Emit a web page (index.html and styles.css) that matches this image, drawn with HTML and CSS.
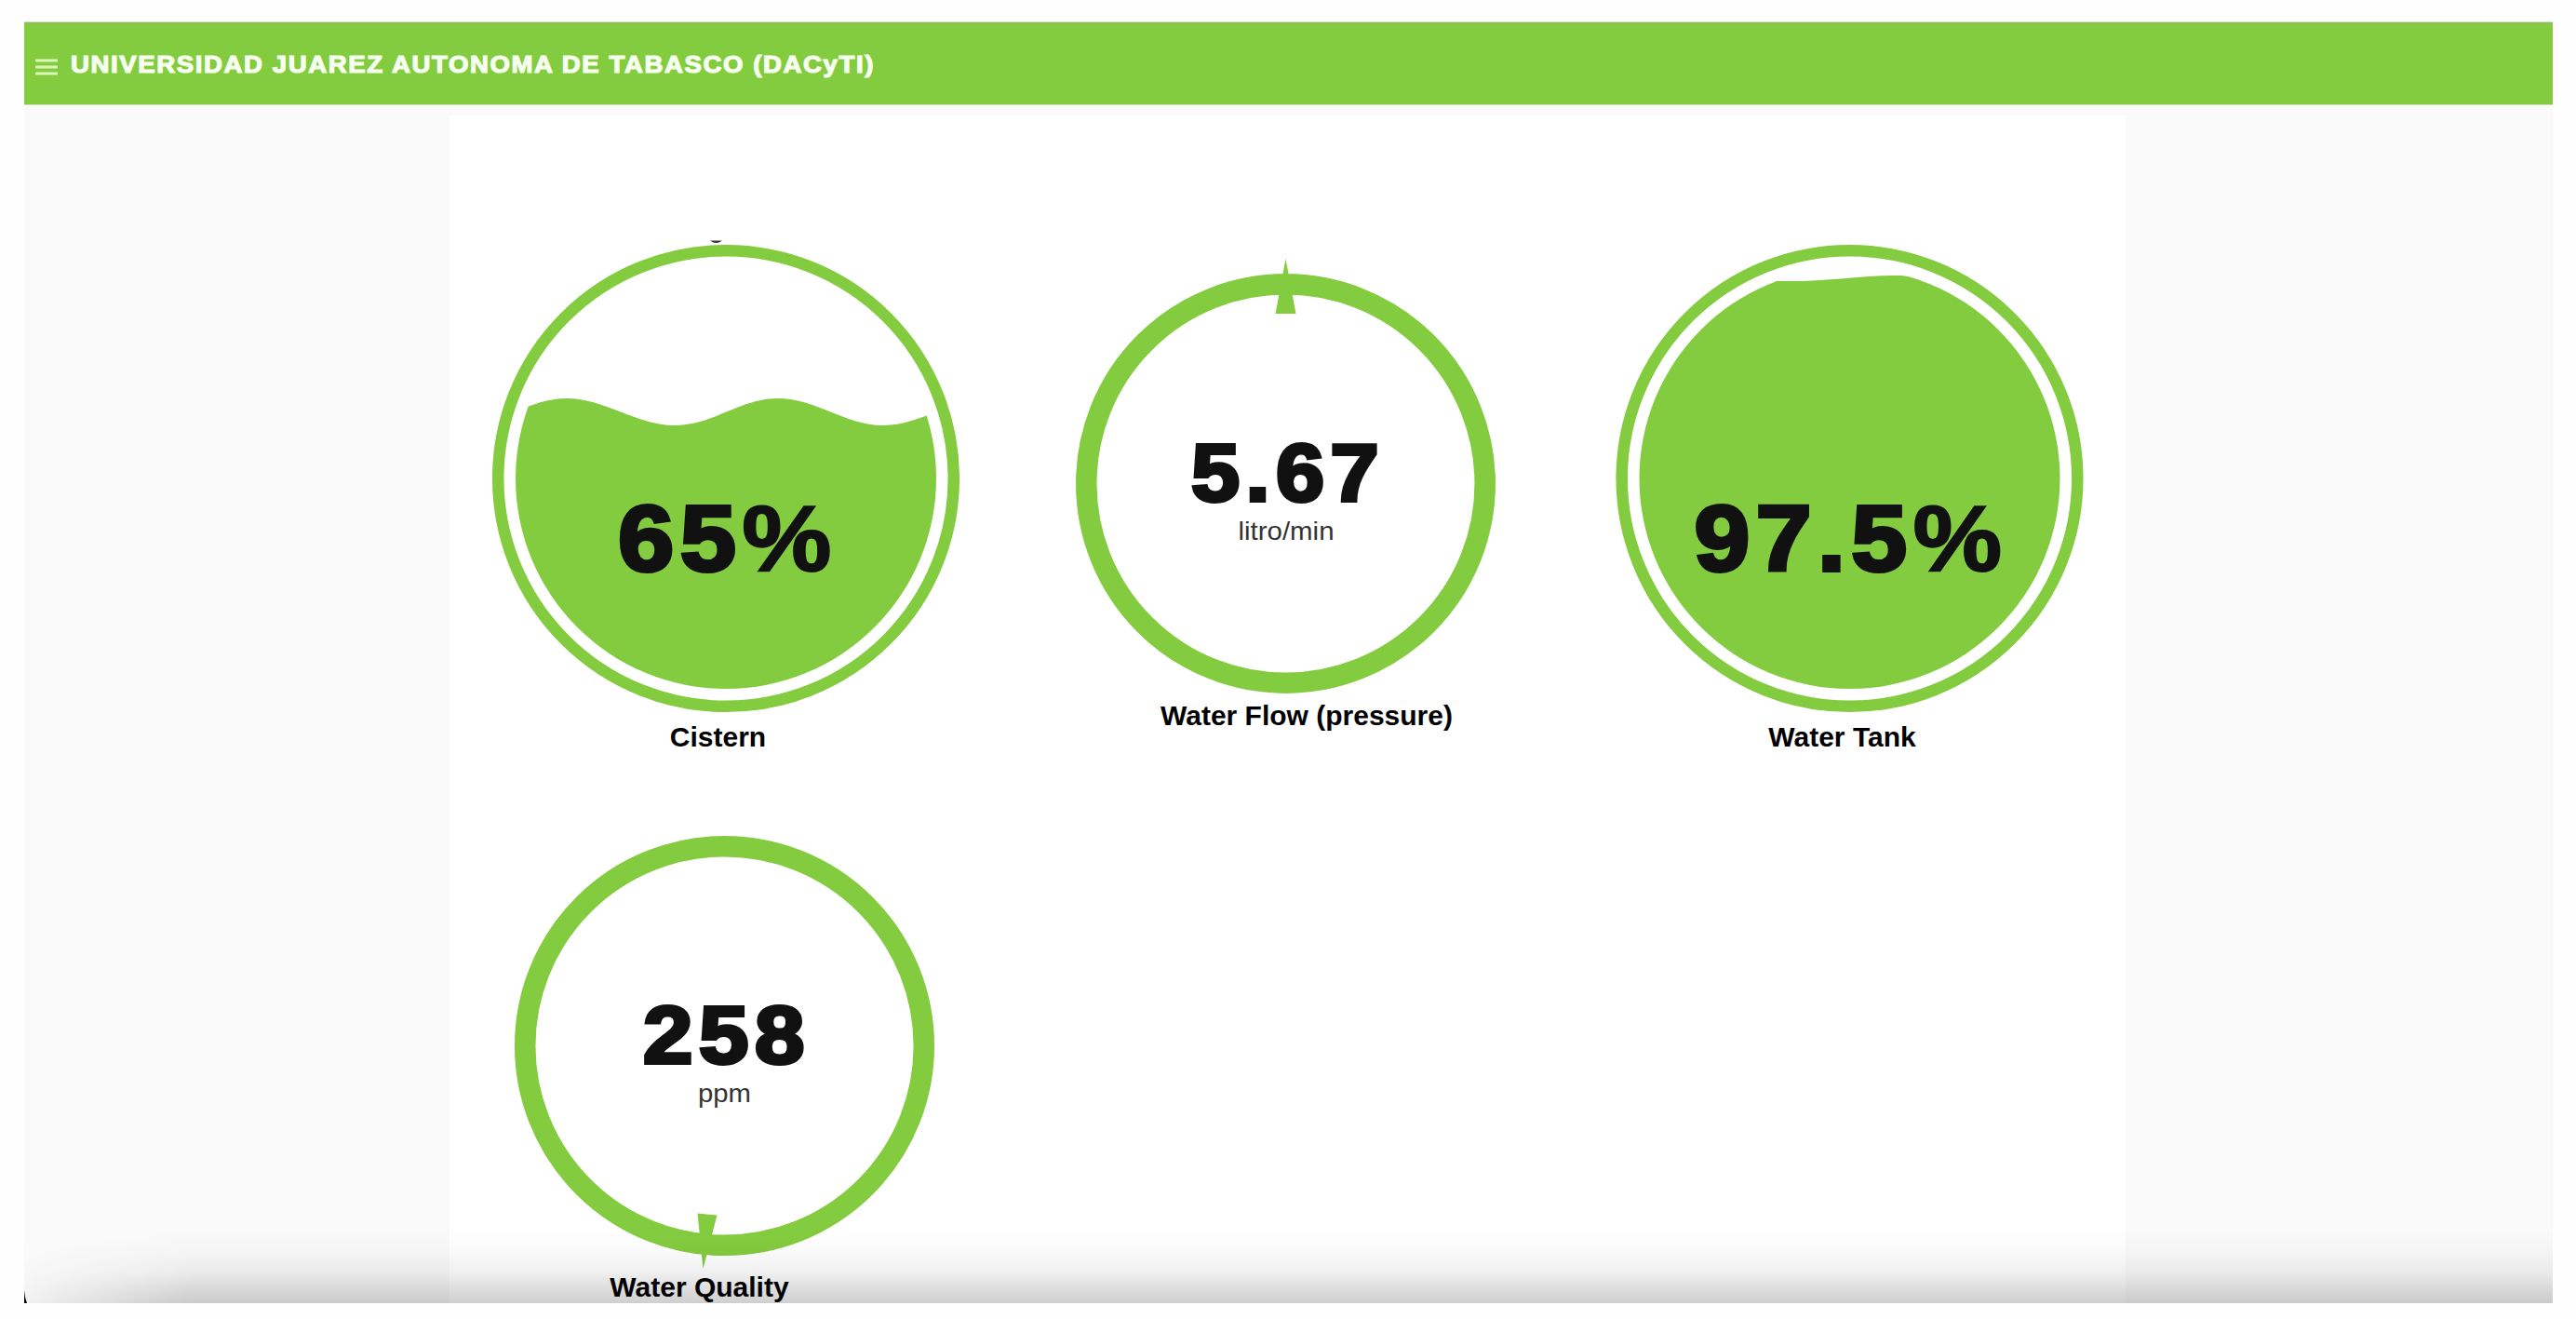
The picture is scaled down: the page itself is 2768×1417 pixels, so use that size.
FILE: index.html
```html
<!DOCTYPE html>
<html lang="es">
<head>
  <meta charset="UTF-8">
  <meta name="viewport" content="width=device-width, initial-scale=1">
  <title>UNIVERSIDAD JUAREZ AUTONOMA DE TABASCO (DACyTI)</title>
  <link rel="stylesheet" href="styles.css">
</head>
<body>

<div class="app">
  <header class="topbar">
    <svg class="menu" width="24" height="18" viewBox="0 0 24 18">
      <path d="M0 2h24M0 9h24M0 16h24"/>
    </svg>
    <svg class="title" width="870" height="40" viewBox="0 0 870 40">
      <text x="0" y="30" textLength="864" lengthAdjust="spacingAndGlyphs">UNIVERSIDAD JUAREZ AUTONOMA DE TABASCO (DACyTI)</text>
    </svg>
  </header>

  <main class="panel">
    <figure class="gauge cistern">
      <svg width="520" height="520" viewBox="0 0 520 520">
        <path class="speck" d="M243 4.500h13q-6.500 5 -13 0z"/>
        <circle class="ring" cx="260" cy="260" r="244.800"/>
        <clipPath id="cisternClip"><circle cx="260" cy="260" r="226"/></clipPath>
        <path class="water" clip-path="url(#cisternClip)" d="M-24 203C17 203 48 174 89 174C130 174 164 203 205 203C246 203 275 174 316 174C357 174 388 203 429 203C470 203 501 174 542 174V520H-24z"/>
        <text class="value big" x="262" y="358.500" textLength="236" lengthAdjust="spacingAndGlyphs">65<tspan class="percent">%</tspan></text>
      </svg>
      <figcaption>Cistern</figcaption>
    </figure>

    <figure class="gauge flow">
      <svg width="520" height="520" viewBox="0 0 520 520">
        <circle class="dial" cx="260.500" cy="265.500" r="214.200"/>
        <path class="water" d="M260.500 24L271.500 83H249.500z"/>
        <text class="value" x="263" y="283.500" textLength="208" lengthAdjust="spacingAndGlyphs">5.67</text>
        <text class="unit" x="261" y="326" textLength="103" lengthAdjust="spacingAndGlyphs">litro/min</text>
      </svg>
      <figcaption>Water Flow (pressure)</figcaption>
    </figure>

    <figure class="gauge tank">
      <svg width="520" height="520" viewBox="0 0 520 520">
        <circle class="ring" cx="259.500" cy="260" r="244.800"/>
        <clipPath id="tankClip"><circle cx="259.500" cy="260" r="226"/></clipPath>
        <path class="water" clip-path="url(#tankClip)" d="M0 48H184C235 49 275 41 314 42L520 60V520H0z"/>
        <text class="value big" x="261" y="358.500" textLength="337" lengthAdjust="spacingAndGlyphs">97.5<tspan class="percent">%</tspan></text>
      </svg>
      <figcaption>Water Tank</figcaption>
    </figure>

    <figure class="gauge quality">
      <svg width="520" height="520" viewBox="0 0 520 520">
        <circle class="dial" cx="258.500" cy="265.500" r="214.300"/>
        <path class="water" d="M229.500 445.500L250.500 447.500L235.500 505z"/>
        <text class="value" x="261" y="284" textLength="180" lengthAdjust="spacingAndGlyphs">258</text>
        <text class="unit" x="258.500" y="325.500" textLength="57" lengthAdjust="spacingAndGlyphs">ppm</text>
      </svg>
      <figcaption>Water Quality</figcaption>
    </figure>
  </main>

  <div class="shade"></div>
  <div class="corner"></div>
</div>

</body>
</html>
```
FILE: styles.css
```css
* {
  box-sizing: border-box;
}
body {
  margin: 0;
  padding: 23px 25px 17px 26px;
  height: 1417px;
  overflow: hidden;
  background-color: #fefefe;
  font-family: "Liberation Sans", Arial, sans-serif;
}
.app {
  position: relative;
  height: 1377px;
  overflow: hidden;
  background-color: #fafafa;
}
.topbar {
  display: flex;
  align-items: center;
  height: 90px;
  padding: 0 12px;
  gap: 14px;
  background-color: #84cc3f;
  border-top: 1px solid #d5e5c4;
  border-bottom: 1px solid #c3e3a0;
  box-shadow: inset 0 2px 1px #8fbc5c;
}
.menu {
  margin-top: 7px;
  stroke: #d9f5ba;
  stroke-width: 3;
}
.title text {
  font-size: 26px;
  font-weight: bold;
  letter-spacing: 1.5px;
  fill: #f7fff0;
  stroke: #f7fff0;
  stroke-width: 1.2;
}
.panel {
  display: grid;
  grid-template-columns: 601px 607px 520px;
  grid-template-rows: 604px 560px;
  width: 1801px;
  height: 1300px;
  margin: 11px 0 0 457px;
  padding: 130px 0 0 37px;
  background-color: #fff;
}
.gauge {
  width: 520px;
  margin: 0;
}
.gauge svg {
  display: block;
  overflow: visible;
}
.ring {
  fill: none;
  stroke: #84cc3f;
  stroke-width: 12.5;
}
.dial {
  fill: none;
  stroke: #84cc3f;
  stroke-width: 22.5;
}
.water {
  fill: #84cc3f;
}
.speck {
  fill: #333;
}
.value {
  font-size: 87px;
  font-weight: bold;
  letter-spacing: 6px;
  text-anchor: middle;
  fill: #111;
  stroke: #111;
  stroke-width: 4;
}
.value.big {
  font-size: 100px;
}
.percent {
  stroke-width: 2;
}
.unit {
  font-size: 28.5px;
  text-anchor: middle;
  fill: #333;
}
.gauge figcaption {
  position: relative;
  z-index: 2;
  font-size: 30px;
  font-weight: bold;
  line-height: 34px;
  text-align: center;
  color: #000;
}
.cistern figcaption {
  padding: 1px 17px 0 0;
}
.flow figcaption {
  margin-top: -22px;
  padding-left: 46px;
}
.tank figcaption {
  padding: 1px 17px 0 0;
}
.quality figcaption {
  margin-top: -12px;
  padding-right: 57px;
}

/* shadow along the bottom edge, fading out in the left corner */
.shade {
  position: absolute;
  left: 0;
  right: 0;
  bottom: 0;
  height: 84px;
  background: linear-gradient(rgba(0,0,0,0), rgba(0,0,0,0.015) 30%, rgba(0,0,0,0.06) 60%, rgba(0,0,0,0.19));
  -webkit-mask-image: linear-gradient(100deg, rgba(0,0,0,0.1), #000 190px);
  mask-image: linear-gradient(100deg, rgba(0,0,0,0.1), #000 190px);
}
.corner {
  position: absolute;
  left: 0;
  bottom: 0;
  width: 3px;
  height: 14px;
  background-color: #000;
  clip-path: polygon(0 0, 30% 50%, 100% 100%, 0 100%);
}
```
